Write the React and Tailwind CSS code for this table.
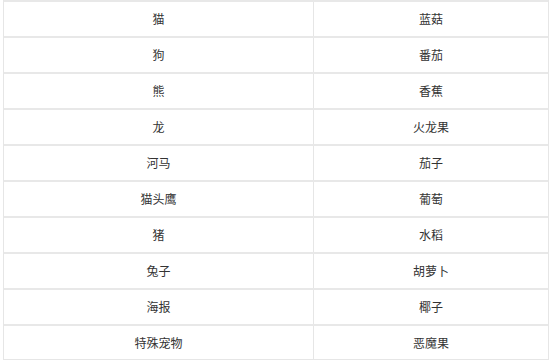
import React from "react";

const rows = [
  ["猫", "蓝菇"],
  ["狗", "番茄"],
  ["熊", "香蕉"],
  ["龙", "火龙果"],
  ["河马", "茄子"],
  ["猫头鹰", "葡萄"],
  ["猪", "水稻"],
  ["兔子", "胡萝卜"],
  ["海报", "椰子"],
  ["特殊宠物", "恶魔果"],
];

const App = () => {
  return (
    <div
      className="bg-white w-[550px] h-[361px] overflow-hidden pl-[3px]"
      style={{ fontFamily: '"Microsoft YaHei", "Noto Sans CJK SC", sans-serif' }}
    >
      <div className="w-[546px] border-x border-b border-[#e6e6e6] text-[12px] text-[#333]">
        {rows.map(([left, right], i) => (
          <div
            key={i}
            className={`flex border-t-2 border-[#e8e8e8] ${
              i === rows.length - 1 ? "h-[35px]" : "h-[36px]"
            }`}
          >
            <div className="w-[310px] flex items-center justify-center border-r border-[#e6e6e6]">
              {left}
            </div>
            <div className="flex-1 flex items-center justify-center">{right}</div>
          </div>
        ))}
      </div>
    </div>
  );
};

export default App;
